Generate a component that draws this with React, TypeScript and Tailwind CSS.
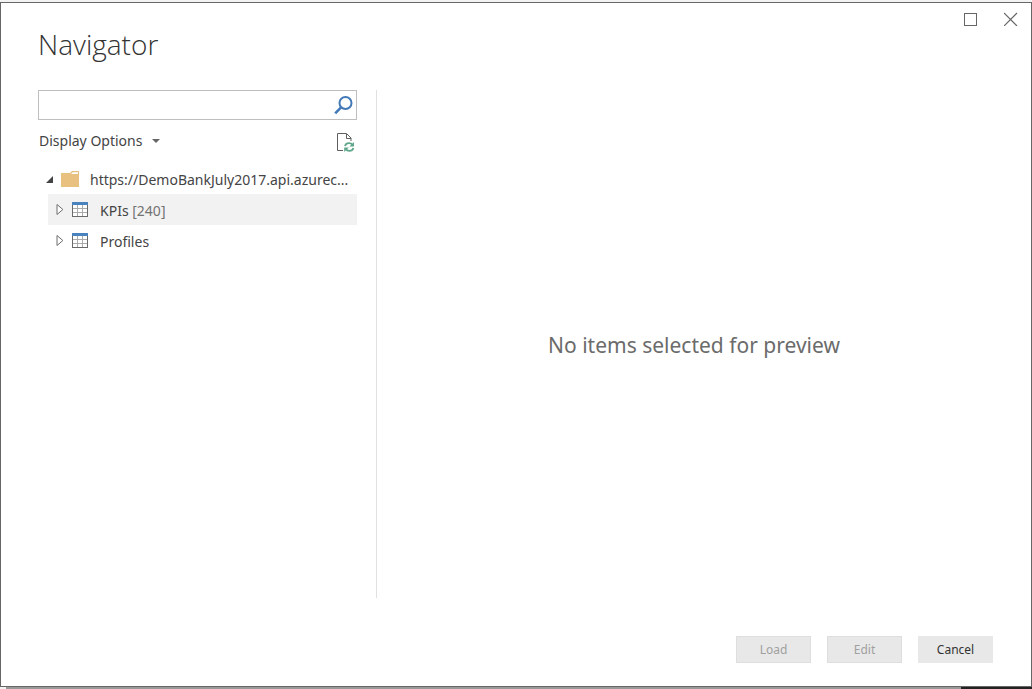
import { useState } from "react";

function SearchIcon() {
  return (
    <svg width="19" height="19" viewBox="0 0 19 19" fill="none" stroke="#4279b8" aria-hidden="true">
      <circle cx="11.5" cy="7" r="6" strokeWidth="2" />
      <path d="M7.3 11.2 1.2 17.3" strokeWidth="2.6" />
    </svg>
  );
}

function RefreshPageIcon() {
  return (
    <svg width="18" height="20" viewBox="0 0 18 20" fill="none" aria-hidden="true">
      <path d="M6 18.5H0.5V1.5H9.5L14 6V9" stroke="#5f5f5f" />
      <path d="M9.5 2V6.5H14" stroke="#5f5f5f" />
      <path d="M8 14C8.6 12 10.2 11.2 12 11.2c1.6 0 2.8.6 3.6 1.8" stroke="#5fa78a" strokeWidth="1.8" />
      <path d="M17 10V14.6H12.4z" fill="#5fa78a" />
      <path d="M16.4 16c-.6 2-2.2 2.9-4 2.9-1.6 0-2.9-.6-3.7-1.8" stroke="#5fa78a" strokeWidth="1.8" />
      <path d="M7.2 20V15.5h4.6z" fill="#5fa78a" />
    </svg>
  );
}

function FolderIcon() {
  return (
    <svg width="18" height="16" viewBox="0 0 18 16" className="shrink-0" aria-hidden="true">
      <path d="M0 2H9L11 0H18V16H0z" fill="#e8c080" />
      <path d="M11.7 1.2H17V3H10z" fill="#fff" />
    </svg>
  );
}

function TableIcon() {
  return (
    <svg width="16" height="15" viewBox="0 0 16 15" className="shrink-0" shapeRendering="crispEdges" aria-hidden="true">
      <rect width="16" height="15" fill="#fff" />
      <path d="M5.5 3V14M10.5 3V14M1 6.5H15M1 10.5H15" stroke="#ababab" fill="none" />
      <path d="M0.5 3V14.5H15.5V3" stroke="#6a6a6a" fill="none" />
      <rect width="16" height="3" fill="#4a82bd" />
    </svg>
  );
}

function TreeRow({ name, count }: { name: string; count?: number }) {
  const [open, setOpen] = useState(false);
  return (
    <li
      role="treeitem"
      aria-expanded={open}
      aria-selected={count !== undefined}
      className={`flex h-[31px] items-center pl-2 ${count !== undefined ? "bg-[#f2f2f2]" : ""}`}
    >
      <button type="button" aria-label={`Expand ${name}`} onClick={() => setOpen(!open)} className="mr-2">
        <svg width="8" height="11" viewBox="0 0 8 11" fill="#fff" stroke="#6e6e6e" aria-hidden="true">
          <path d="M1 0.5 6.9 5.5 1 10.5z" />
        </svg>
      </button>
      <TableIcon />
      <span className="ml-3 pt-[2px] text-[#444]">
        {name}
        {count !== undefined && <span className="text-[#737373]"> [{count}]</span>}
      </span>
    </li>
  );
}

export default function App() {
  const [query, setQuery] = useState("");
  return (
    <div className="flex min-h-screen flex-col bg-[#f3f3f3] pt-[2px] font-['Noto_Sans','Open_Sans',sans-serif] text-sm text-[#444]">
      <div className="flex flex-1 flex-col border border-[#666] bg-white">
        <header className="flex h-[87px] items-start justify-between pr-[13px] pl-[37px]">
          <h1 className="pt-[21px] font-['Open_Sans',sans-serif] text-[28px] leading-10 font-light text-[#333]">Navigator</h1>
          <div className="flex gap-[26px] pt-[9px]">
            <button type="button" aria-label="Maximize">
              <svg width="14" height="14" viewBox="0 0 14 14" fill="none" stroke="#666" aria-hidden="true">
                <rect x="0.5" y="1.5" width="12" height="12" />
              </svg>
            </button>
            <button type="button" aria-label="Close">
              <svg width="14" height="14" viewBox="0 0 14 14" stroke="#666" strokeWidth="1.2" aria-hidden="true">
                <path d="M0 1 13 14M13 1 0 14" />
              </svg>
            </button>
          </div>
        </header>

        <main className="flex flex-1 gap-[19px] pr-5 pl-[37px]">
          <aside className="w-[319px] shrink-0">
            <label className="flex h-[30px] items-center border border-[#bfbfbf] pr-[3px] pl-2">
              <input
                type="text"
                aria-label="Search"
                value={query}
                onChange={(e) => setQuery(e.target.value)}
                className="min-w-0 flex-1 outline-none"
              />
              <SearchIcon />
            </label>

            <div className="flex h-11 items-center justify-between pr-[2px]">
              <button type="button" aria-haspopup="menu" className="flex items-center gap-[10px] pb-[2px] pl-px">
                Display Options
                <svg width="8" height="4" viewBox="0 0 8 4" fill="#666" aria-hidden="true">
                  <path d="M0 0H8L4 4z" />
                </svg>
              </button>
              <button type="button" aria-label="Refresh">
                <RefreshPageIcon />
              </button>
            </div>

            <ul role="tree" aria-label="Data sources">
              <li role="treeitem" aria-expanded="true" aria-selected="false">
                <div className="flex h-[30px] items-center pl-2">
                  <button type="button" aria-label="Collapse" className="mr-2">
                    <svg width="7" height="7" viewBox="0 0 7 7" fill="#444" aria-hidden="true">
                      <path d="M7 0V7H0z" />
                    </svg>
                  </button>
                  <FolderIcon />
                  <span className="ml-[11px] pt-[2px] whitespace-nowrap">https://DemoBankJuly2017.api.azurec...</span>
                </div>
                <ul role="group" className="pl-[10px]">
                  <TreeRow name="KPIs" count={240} />
                  <TreeRow name="Profiles" />
                </ul>
              </li>
            </ul>
          </aside>

          <section className="flex flex-1 items-center justify-center border-l border-[#e1e1e1]">
            <p className="pt-[2px] text-[21px] leading-8 text-[#6b6b6b]">No items selected for preview</p>
          </section>
        </main>

        <footer className="flex justify-end gap-4 pt-[38px] pr-[38px] pb-[23px] text-xs">
          <button type="button" disabled className="h-[27px] w-[75px] border border-[#dedede] bg-[#e8e8e8] pt-px text-[#a0a0a0]">
            Load
          </button>
          <button type="button" disabled className="h-[27px] w-[75px] border border-[#dedede] bg-[#e8e8e8] pt-px text-[#a0a0a0]">
            Edit
          </button>
          <button type="button" className="h-[27px] w-[75px] bg-[#e8e8e8] pt-px text-[#333]">
            Cancel
          </button>
        </footer>
      </div>
      <div className="flex h-[2px] bg-[#f3f3f3] pl-[6px]">
        <div className="flex-1 bg-[#999]" />
        <div className="w-[71px] bg-[#222]" />
      </div>
    </div>
  );
}
